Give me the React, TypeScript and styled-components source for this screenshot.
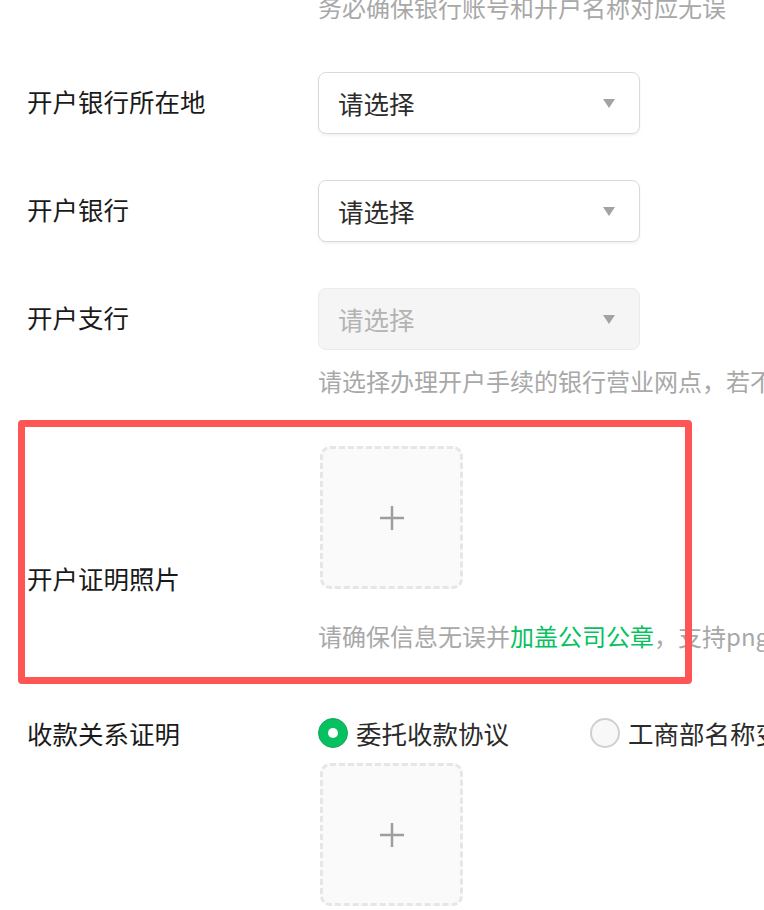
import React from "react";
import styled, { createGlobalStyle } from "styled-components";

const GlobalStyle = createGlobalStyle`
  html, body {
    margin: 0;
    padding: 0;
    background: #ffffff;
    overflow: hidden;
  }
  body {
    font-family: "Noto Sans CJK SC", "Noto Sans", sans-serif;
  }
`;

const Form = styled.div`
  box-sizing: border-box;
  width: 764px;
  height: 910px;
  padding-left: 27px;
  display: flex;
  flex-direction: column;
  overflow: hidden;
`;

const FormItem = styled.div<{ $mt: number }>`
  position: relative;
  display: flex;
  align-items: flex-start;
  margin-top: ${(p) => p.$mt}px;
`;

const Label = styled.div<{ $top?: number }>`
  width: 291px;
  flex-shrink: 0;
  margin-top: ${(p) => p.$top ?? 0}px;
  font-size: 25.5px;
  line-height: 36px;
  color: #1a1a1a;
`;

const Control = styled.div`
  flex: 1;
  min-width: 0;
  display: flex;
  flex-direction: column;
  align-items: flex-start;
`;

const Select = styled.div<{ $disabled?: boolean }>`
  box-sizing: border-box;
  width: 322px;
  height: 62px;
  padding: 0 24px 2px 19px;
  display: flex;
  align-items: center;
  justify-content: space-between;
  border: 1.5px solid ${(p) => (p.$disabled ? "#ebebeb" : "#dadada")};
  border-radius: 8px;
  background: ${(p) => (p.$disabled ? "#f5f5f5" : "#ffffff")};
  box-shadow: ${(p) => (p.$disabled ? "none" : "0 2px 3px rgba(0, 0, 0, 0.05)")};
  font-size: 25.5px;
  color: ${(p) => (p.$disabled ? "#b3b3b3" : "#2b2b2b")};
`;

const Caret = styled.span`
  width: 0;
  height: 0;
  margin-top: 2px;
  border-left: 6.5px solid transparent;
  border-right: 6.5px solid transparent;
  border-top: 9px solid #a3a3a3;
`;

const Hint = styled.div<{ $mt?: number }>`
  margin-top: ${(p) => p.$mt ?? 0}px;
  font-size: 24px;
  line-height: 36px;
  color: #a8a8a8;
  white-space: nowrap;
`;

const Highlight = styled.span`
  color: #07c160;
`;

const Upload = styled.div<{ $mt?: number }>`
  box-sizing: border-box;
  width: 143px;
  height: 143px;
  margin-left: 2px;
  margin-top: ${(p) => p.$mt ?? 0}px;
  border: 3px dashed #e6e6e6;
  border-radius: 10px;
  background: #fafafa;
  display: flex;
  align-items: center;
  justify-content: center;
`;

const Annotation = styled.div`
  position: absolute;
  left: -9px;
  top: -26px;
  width: 674px;
  height: 264px;
  box-sizing: border-box;
  border: 7px solid #ff5555;
  border-radius: 4px;
  pointer-events: none;
`;

const RadioGroup = styled.div`
  display: flex;
  align-items: center;
  height: 36px;
  white-space: nowrap;
`;

const RadioOption = styled.label<{ $gap?: number }>`
  display: flex;
  align-items: center;
  margin-right: ${(p) => p.$gap ?? 0}px;
  font-size: 25.5px;
  line-height: 36px;
  color: #2b2b2b;
`;

const RadioDot = styled.span<{ $checked?: boolean }>`
  box-sizing: border-box;
  width: 30px;
  height: 30px;
  margin-right: 8px;
  border-radius: 50%;
  flex-shrink: 0;
  display: flex;
  align-items: center;
  justify-content: center;
  border: ${(p) => (p.$checked ? "1.5px solid #12a852" : "2px solid #d0d0d0")};
  background: ${(p) => (p.$checked ? "#07c160" : "#f8f8f8")};

  &::after {
    content: "";
    display: ${(p) => (p.$checked ? "block" : "none")};
    width: 10px;
    height: 10px;
    border-radius: 50%;
    background: #ffffff;
  }
`;

const PlusIcon = () => (
  <svg width="26" height="26" viewBox="0 0 26 26">
    <line x1="1" y1="13" x2="25" y2="13" stroke="#9e9e9e" strokeWidth="2.5" />
    <line x1="13" y1="1" x2="13" y2="25" stroke="#9e9e9e" strokeWidth="2.5" />
  </svg>
);

export default function App() {
  return (
    <>
      <GlobalStyle />
      <Form>
        <FormItem $mt={-11}>
          <Label />
          <Control>
            <Hint>务必确保银行账号和开户名称对应无误</Hint>
          </Control>
        </FormItem>

        <FormItem $mt={47}>
          <Label $top={11}>开户银行所在地</Label>
          <Control>
            <Select>
              请选择
              <Caret />
            </Select>
          </Control>
        </FormItem>

        <FormItem $mt={46}>
          <Label $top={11}>开户银行</Label>
          <Control>
            <Select>
              请选择
              <Caret />
            </Select>
          </Control>
        </FormItem>

        <FormItem $mt={46}>
          <Label $top={11}>开户支行</Label>
          <Control>
            <Select $disabled>
              请选择
              <Caret />
            </Select>
            <Hint $mt={13}>请选择办理开户手续的银行营业网点，若不确定请咨询开户银行</Hint>
          </Control>
        </FormItem>

        <FormItem $mt={47}>
          <Label $top={114}>开户证明照片</Label>
          <Control>
            <Upload>
              <PlusIcon />
            </Upload>
            <Hint $mt={29}>
              请确保信息无误并<Highlight>加盖公司公章</Highlight>，支持png、jpg格式图片
            </Hint>
          </Control>
          <Annotation />
        </FormItem>

        <FormItem $mt={61}>
          <Label>收款关系证明</Label>
          <Control>
            <RadioGroup>
              <RadioOption $gap={81}>
                <RadioDot $checked />
                委托收款协议
              </RadioOption>
              <RadioOption>
                <RadioDot />
                工商部名称变更证明
              </RadioOption>
            </RadioGroup>
            <Upload $mt={12}>
              <PlusIcon />
            </Upload>
          </Control>
        </FormItem>
      </Form>
    </>
  );
}
